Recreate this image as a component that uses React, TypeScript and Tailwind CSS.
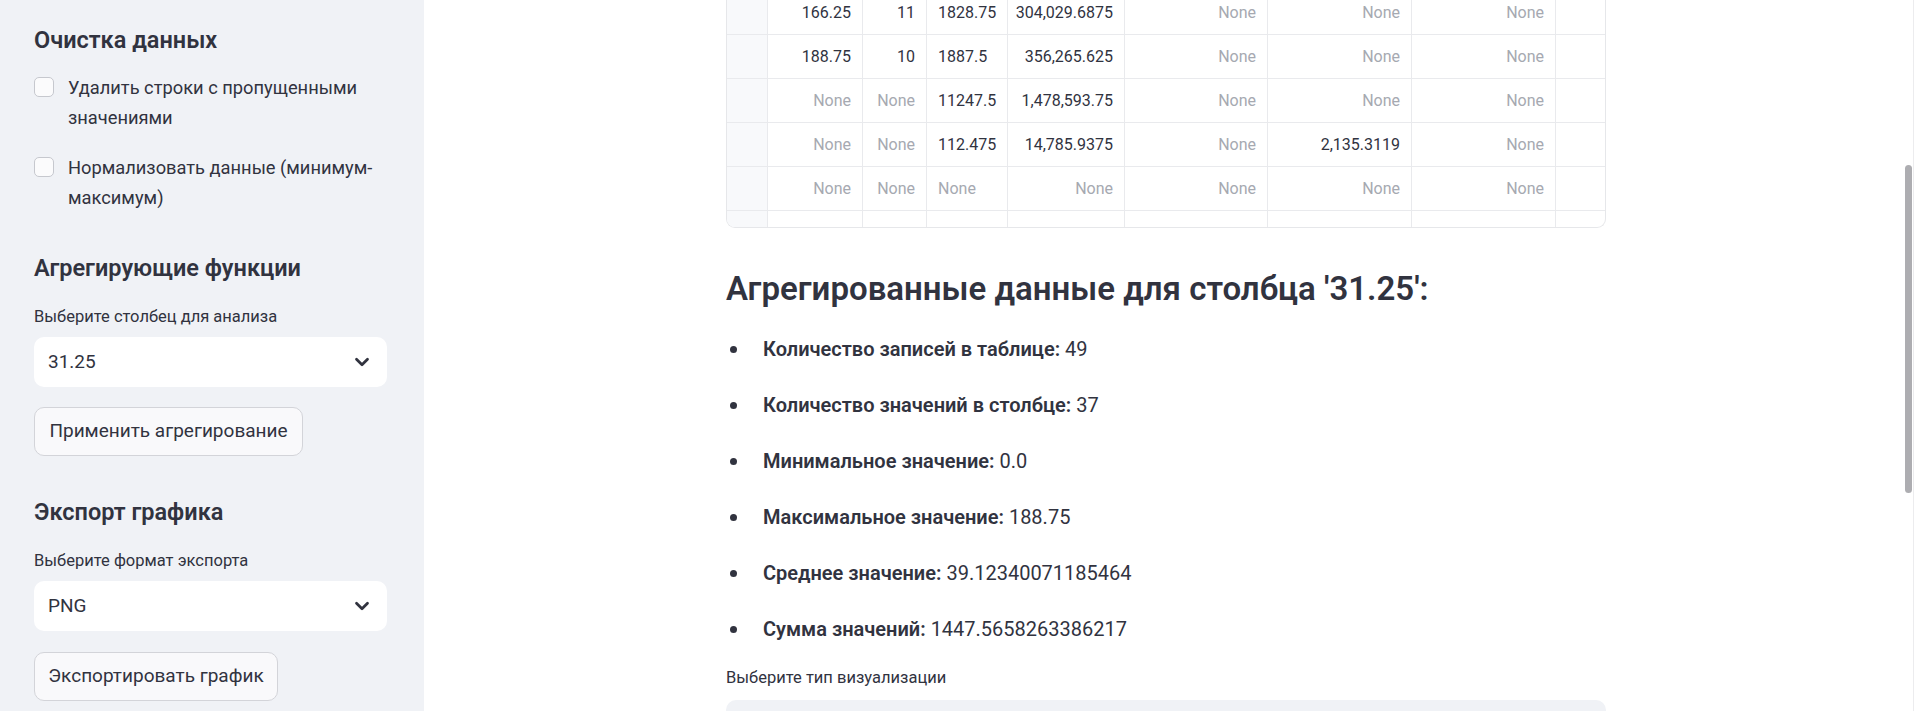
import React from "react";
import { ChevronDown } from "lucide-react";

type Cell = { v: string; none?: boolean; left?: boolean };

const n = (): Cell => ({ v: "None", none: true });
const c = (v: string, left = false): Cell => ({ v, left });

const rows: Cell[][] = [
  [c("166.25"), c("11"), c("1828.75", true), c("304,029.6875"), n(), n(), n()],
  [c("188.75"), c("10"), c("1887.5", true), c("356,265.625"), n(), n(), n()],
  [n(), n(), c("11247.5", true), c("1,478,593.75"), n(), n(), n()],
  [n(), n(), c("112.475", true), c("14,785.9375"), n(), c("2,135.3119"), n()],
  [n(), n(), { v: "None", none: true, left: true }, n(), n(), n(), n()],
];

const widths = ["w-[95px]", "w-[64px]", "w-[81px]", "w-[117px]", "w-[143px]", "w-[144px]", "w-[144px]"];

const stats = [
  ["Количество записей в таблице:", "49"],
  ["Количество значений в столбце:", "37"],
  ["Минимальное значение:", "0.0"],
  ["Максимальное значение:", "188.75"],
  ["Среднее значение:", "39.12340071185464"],
  ["Сумма значений:", "1447.5658263386217"],
];

const Checkbox: React.FC<{ lines: string[]; className?: string }> = ({ lines, className }) => (
  <div className={"flex items-start gap-[14px] " + (className ?? "")}>
    <div className="mt-[4px] w-[20px] h-[20px] shrink-0 rounded-[5px] border border-[#c6c8ce] bg-[#fbfbfc]" />
    <div className="text-[18.3px] leading-[30px]">
      {lines.map((l) => (
        <div key={l}>{l}</div>
      ))}
    </div>
  </div>
);

const SelectBox: React.FC<{ value: string; className?: string }> = ({ value, className }) => (
  <div
    className={
      "flex items-center justify-between h-[50px] w-[353px] rounded-[10px] bg-white pl-[14px] pr-[14px] text-[19px] " +
      (className ?? "")
    }
  >
    <span>{value}</span>
    <ChevronDown size={22} strokeWidth={3} className="text-[#31333f]" />
  </div>
);

const Button: React.FC<{ label: string; w: string; className?: string }> = ({ label, w, className }) => (
  <div
    className={
      "flex items-center justify-center h-[49px] rounded-[10px] border border-[#d3d4d9] bg-[#f9f9fb] text-[19px] " +
      w +
      " " +
      (className ?? "")
    }
  >
    {label}
  </div>
);

export default function App() {
  return (
    <div className="relative flex h-[711px] w-full overflow-hidden bg-white text-[#31333f] font-['Source_Sans_Pro','Roboto',sans-serif]">
      <aside className="w-[424px] shrink-0 h-full bg-[#f0f2f6] pl-[34px] pr-[37px] pt-[24px]">
        <h3 className="h-[32px] text-[23.5px] leading-[32px] font-semibold">Очистка данных</h3>
        <Checkbox className="mt-[17px]" lines={["Удалить строки с пропущенными", "значениями"]} />
        <Checkbox className="mt-[20px]" lines={["Нормализовать данные (минимум-", "максимум)"]} />
        <h3 className="mt-[39px] h-[32px] text-[23.5px] leading-[32px] font-semibold">Агрегирующие функции</h3>
        <div className="mt-[21px] text-[16.5px] leading-[24px]">Выберите столбец для анализа</div>
        <SelectBox className="mt-[8px]" value="31.25" />
        <Button className="mt-[20px]" w="w-[269px]" label="Применить агрегирование" />
        <h3 className="mt-[40px] h-[32px] text-[23.5px] leading-[32px] font-semibold">Экспорт графика</h3>
        <div className="mt-[21px] text-[16.5px] leading-[24px]">Выберите формат экспорта</div>
        <SelectBox className="mt-[8px]" value="PNG" />
        <Button className="mt-[21px]" w="w-[244px]" label="Экспортировать график" />
      </aside>

      <main className="flex-1 h-full pl-[302px]">
        <div className="w-[880px]">
          <div className="mt-[-9px] border border-t-0 border-[#e6e7ea] rounded-b-[9px] overflow-hidden text-[16px]">
            {rows.map((r, i) => (
              <div key={i} className="flex h-[44px] border-b border-[#e9eaed]">
                <div className="w-[41px] shrink-0 border-r border-[#e9eaed] bg-[#f8f9fb]" />
                {r.map((cell, j) => (
                  <div
                    key={j}
                    className={
                      "flex items-center shrink-0 px-[11px] border-r border-[#e9eaed] " +
                      widths[j] +
                      (cell.left ? " justify-start" : " justify-end") +
                      (cell.none ? " text-[#a6a9b1]" : "")
                    }
                  >
                    {cell.v}
                  </div>
                ))}
                <div className="flex-1" />
              </div>
            ))}
            <div className="flex h-[16px]">
              <div className="w-[41px] shrink-0 border-r border-[#e9eaed] bg-[#f8f9fb]" />
              {widths.map((w, j) => (
                <div key={j} className={"shrink-0 border-r border-[#e9eaed] " + w} />
              ))}
            </div>
          </div>

          <h3 className="mt-[37px] h-[48px] text-[33px] leading-[48px] font-semibold">
            Агрегированные данные для столбца '31.25':
          </h3>

          <ul className="mt-[8px]">
            {stats.map(([k, v]) => (
              <li key={k} className="flex h-[56px] items-center text-[20px]">
                <span className="flex w-[37px] shrink-0 pl-[4px]">
                  <span className="h-[7px] w-[7px] rounded-full bg-[#31333f]" />
                </span>
                <span>
                  <b className="font-semibold">{k}</b> {v}
                </span>
              </li>
            ))}
          </ul>

          <div className="mt-[9px] text-[16.5px] leading-[24px]">Выберите тип визуализации</div>
          <div className="mt-[10px] h-[50px] w-[880px] rounded-[10px] bg-[#f0f2f6]" />
        </div>
      </main>

      <div className="absolute right-[5px] top-0 h-full w-px bg-[#ececee]" />
      <div className="absolute right-[7px] top-[165px] h-[328px] w-[7px] rounded-full bg-[#adadb1]" />
    </div>
  );
}
